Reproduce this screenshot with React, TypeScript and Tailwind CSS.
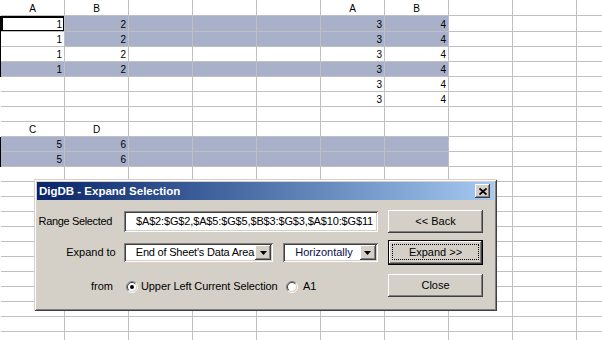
import React from "react";

type Row = { v: string[]; hl?: [number, number]; sel?: boolean; head?: boolean; active?: number; tall?: boolean };

const sheet: Row[] = [
  { v: ["A", "B", "", "", "", "A", "B"], head: true, tall: true },
  { v: ["1", "2", "", "", "", "3", "4"], hl: [1, 6], sel: true, active: 0, tall: true },
  { v: ["1", "2", "", "", "", "3", "4"], hl: [1, 6], sel: true },
  { v: ["1", "2", "", "", "", "3", "4"], sel: true },
  { v: ["1", "2", "", "", "", "3", "4"], hl: [0, 6], sel: true },
  { v: ["", "", "", "", "", "3", "4"] },
  { v: ["", "", "", "", "", "3", "4"] },
  { v: [] },
  { v: ["C", "D"], head: true },
  { v: ["5", "6"], hl: [0, 6], sel: true },
  { v: ["5", "6"], hl: [0, 6], sel: true },
  ...Array.from({ length: 12 }, () => ({ v: [] as string[] })),
];

const raised =
  "bg-[#d4d0c8] shadow-[inset_-1px_-1px_0_#404040,inset_1px_1px_0_#ffffff,inset_-2px_-2px_0_#808080]";
const sunken =
  "bg-white shadow-[inset_1px_1px_0_#808080,inset_-1px_-1px_0_#ffffff,inset_2px_2px_0_#404040,inset_-2px_-2px_0_#d4d0c8]";

const Arrow = () => (
  <div className={`${raised} w-[16px] h-[15px] mr-[2px] shrink-0 flex items-center justify-center`}>
    <svg width="7" height="4" viewBox="0 0 7 4">
      <polygon points="0,0 7,0 3.5,4" fill="#000" />
    </svg>
  </div>
);

const Radio = ({ on }: { on?: boolean }) => (
  <svg width="12" height="12" viewBox="0 0 12 12" className="shrink-0">
    <circle cx="6" cy="6" r="4.5" fill="#fff" />
    <path d="M2.1 9.9 A5.5 5.5 0 0 1 9.9 2.1" stroke="#808080" fill="none" />
    <path d="M9.9 2.1 A5.5 5.5 0 0 1 2.1 9.9" stroke="#ffffff" fill="none" />
    <path d="M2.8 9.2 A4.5 4.5 0 0 1 9.2 2.8" stroke="#404040" fill="none" />
    <path d="M9.2 2.8 A4.5 4.5 0 0 1 2.8 9.2" stroke="#d4d0c8" fill="none" />
    {on && <circle cx="6" cy="6" r="2" fill="#000" />}
  </svg>
);

export default function App() {
  return (
    <div className="relative w-[602px] h-[340px] overflow-hidden bg-white font-['Liberation_Sans',Arial,sans-serif] text-black">
      {/* worksheet */}
      <div className="flex flex-col text-[10px] leading-[11px]">
        {sheet.map((row, r) => (
          <div key={r} className={`flex shrink-0 ${row.tall ? "h-[16px]" : "h-[15px]"}`}>
            <div className={`w-px shrink-0 ${row.sel ? "bg-black" : "bg-white"}`} />
            {Array.from({ length: 10 }).map((_, c) => {
              const on = row.hl && c >= row.hl[0] && c <= row.hl[1];
              const act = row.active === c;
              return (
                <div
                  key={c}
                  className={`w-[64px] shrink-0 border-r border-b border-[#c0c0c0] flex items-end pb-[1px] ${
                    row.head ? "justify-center" : "justify-end pr-[2px]"
                  } ${on ? "bg-[#a9b0c9]" : ""} ${act ? "shadow-[inset_2px_2px_0_#000,inset_-1px_-1px_0_#000]" : ""}`}
                >
                  {row.v[c] ?? ""}
                </div>
              );
            })}
          </div>
        ))}
      </div>

      {/* dialog window */}
      <div className="absolute left-[34px] top-[179px] w-[463px] h-[132px] bg-[#d4d0c8] p-[3px] shadow-[inset_1px_1px_0_#d4d0c8,inset_-1px_-1px_0_#404040,inset_2px_2px_0_#ffffff,inset_-2px_-2px_0_#808080] text-[11px] leading-[13px]">
        <div className="h-[18px] flex items-center justify-between pl-[2px] bg-linear-to-r from-[#0a246a] to-[#a6caf0]">
          <span className="text-white font-bold text-[11.5px]">DigDB - Expand Selection</span>
          <div className={`${raised} w-[15px] h-[14px] mr-[4px] flex items-center justify-center`}>
            <svg width="8" height="7" viewBox="0 0 8 7">
              <path d="M0.5 0.5 L7.5 6.5 M7.5 0.5 L0.5 6.5" stroke="#000" strokeWidth="1.8" />
            </svg>
          </div>
        </div>

        <div className="flex">
          <div className="w-[341px] flex flex-col">
            <div className="mt-[11px] h-[21px] flex items-center">
              <div className="w-[75px] text-right whitespace-nowrap tracking-[-0.35px]">Range Selected</div>
              <div className={`${sunken} ml-[12px] w-[254px] h-full pl-[12px] flex items-center whitespace-nowrap overflow-hidden tracking-[-0.15px]`}>
                $A$2:$G$2,$A$5:$G$5,$B$3:$G$3,$A$10:$G$11
              </div>
            </div>
            <div className="mt-[11px] h-[19px] flex items-center">
              <div className="w-[79px] text-right whitespace-nowrap">Expand to</div>
              <div className={`${sunken} ml-[8px] w-[150px] h-full flex items-center`}>
                <span className="flex-1 pl-[12px] whitespace-nowrap overflow-hidden tracking-[-0.2px]">End of Sheet's Data Area</span>
                <Arrow />
              </div>
              <div className={`${sunken} ml-[10px] w-[95px] h-full flex items-center`}>
                <span className="flex-1 pl-[12px] whitespace-nowrap overflow-hidden text-[#0c0c48]">Horizontally</span>
                <Arrow />
              </div>
            </div>
            <div className="mt-[15px] h-[19px] flex items-center">
              <div className="w-[76px] text-right">from</div>
              <div className="ml-[13px] w-[160px] flex items-center">
                <Radio on />
                <span className="ml-[3px] whitespace-nowrap tracking-[-0.1px]">Upper Left Current Selection</span>
              </div>
              <Radio />
              <span className="ml-[5px]">A1</span>
            </div>
          </div>

          <div className="ml-[10px] w-[95px] flex flex-col">
            <div className={`${raised} mt-[10px] h-[23px] flex items-center justify-center`}>&lt;&lt; Back</div>
            <div className="mt-[7px] h-[25px] border border-black">
              <div className={`${raised} h-full p-[3px] pb-[4px] flex`}>
                <div className="flex-1 border border-dotted border-black flex items-center justify-center">
                  Expand &gt;&gt;
                </div>
              </div>
            </div>
            <div className={`${raised} mt-[9px] h-[23px] flex items-center justify-center`}>Close</div>
          </div>
        </div>
      </div>
    </div>
  );
}
